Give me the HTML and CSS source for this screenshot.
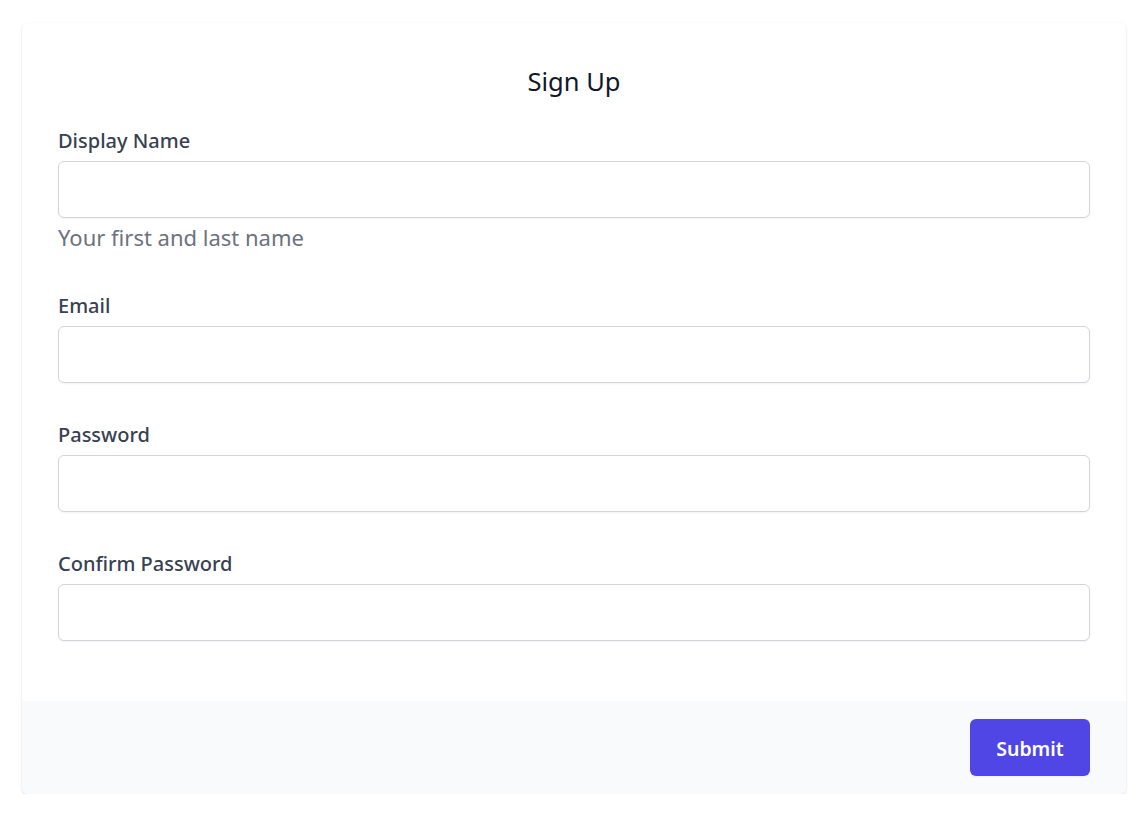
FILE: index.html
```html
<!DOCTYPE html>
<html lang="en">
<head>
<meta charset="utf-8">
<title>Sign Up</title>
<link rel="stylesheet" href="styles.css">
</head>
<body>
<div class="page">
  <form class="card">
    <div class="card-body">
      <h1 class="title">Sign Up</h1>
      <div class="field">
        <label class="label" for="name">Display Name</label>
        <input class="input" id="name" type="text">
        <p class="hint">Your first and last name</p>
      </div>
      <div class="field">
        <label class="label" for="email">Email</label>
        <input class="input" id="email" type="email">
      </div>
      <div class="field">
        <label class="label" for="pw">Password</label>
        <input class="input" id="pw" type="password">
      </div>
      <div class="field">
        <label class="label" for="pw2">Confirm Password</label>
        <input class="input" id="pw2" type="password">
      </div>
    </div>
    <div class="card-footer">
      <button class="btn" type="button">Submit</button>
    </div>
  </form>
</div>
</body>
</html>
```
FILE: styles.css
```css
* { box-sizing: border-box; }
html, body { margin: 0; background: #ffffff; }
body {
  font-family: "Noto Sans", "Open Sans", sans-serif;
  color: #111827;
}
.page {
  padding: 23px 18px 0 22px;
}
.card {
  background: #fff;
  border-radius: 6px;
  box-shadow: 0 1px 3px rgba(0,0,0,0.1), 0 1px 2px rgba(0,0,0,0.06);
  overflow: hidden;
  display: flex;
  flex-direction: column;
}
.card-body {
  padding: 42px 36px 60px;
  display: flex;
  flex-direction: column;
  gap: 39px;
}
.title {
  margin: 0 0 -8px;
  font-size: 25.5px;
  line-height: 32px;
  font-weight: 400;
  text-align: center;
  color: #111827;
}
.field {
  display: flex;
  flex-direction: column;
}
.label {
  font-size: 20px;
  line-height: 26px;
  font-weight: 500;
  color: #374151;
  margin-bottom: 7px;
}
.input {
  height: 57px;
  border: 1px solid #d1d5db;
  border-radius: 6px;
  box-shadow: 0 1px 2px rgba(0,0,0,0.05);
  font: inherit;
  font-size: 18px;
  padding: 0 14px;
  background: #fff;
}
.hint {
  margin: 5px 0 3px;
  font-size: 22px;
  line-height: 28px;
  color: #6b7280;
}
.card-footer {
  background: #f9fafb;
  padding: 18px 36px 18px;
  display: flex;
  justify-content: flex-end;
}
.btn {
  width: 120px;
  height: 57px;
  border: 0;
  border-radius: 6px;
  background: #4f46e5;
  color: #fff;
  font: inherit;
  font-size: 19.5px;
  font-weight: 600;
  padding-top: 2px;
  box-shadow: 0 1px 2px rgba(0,0,0,0.05);
}
```
